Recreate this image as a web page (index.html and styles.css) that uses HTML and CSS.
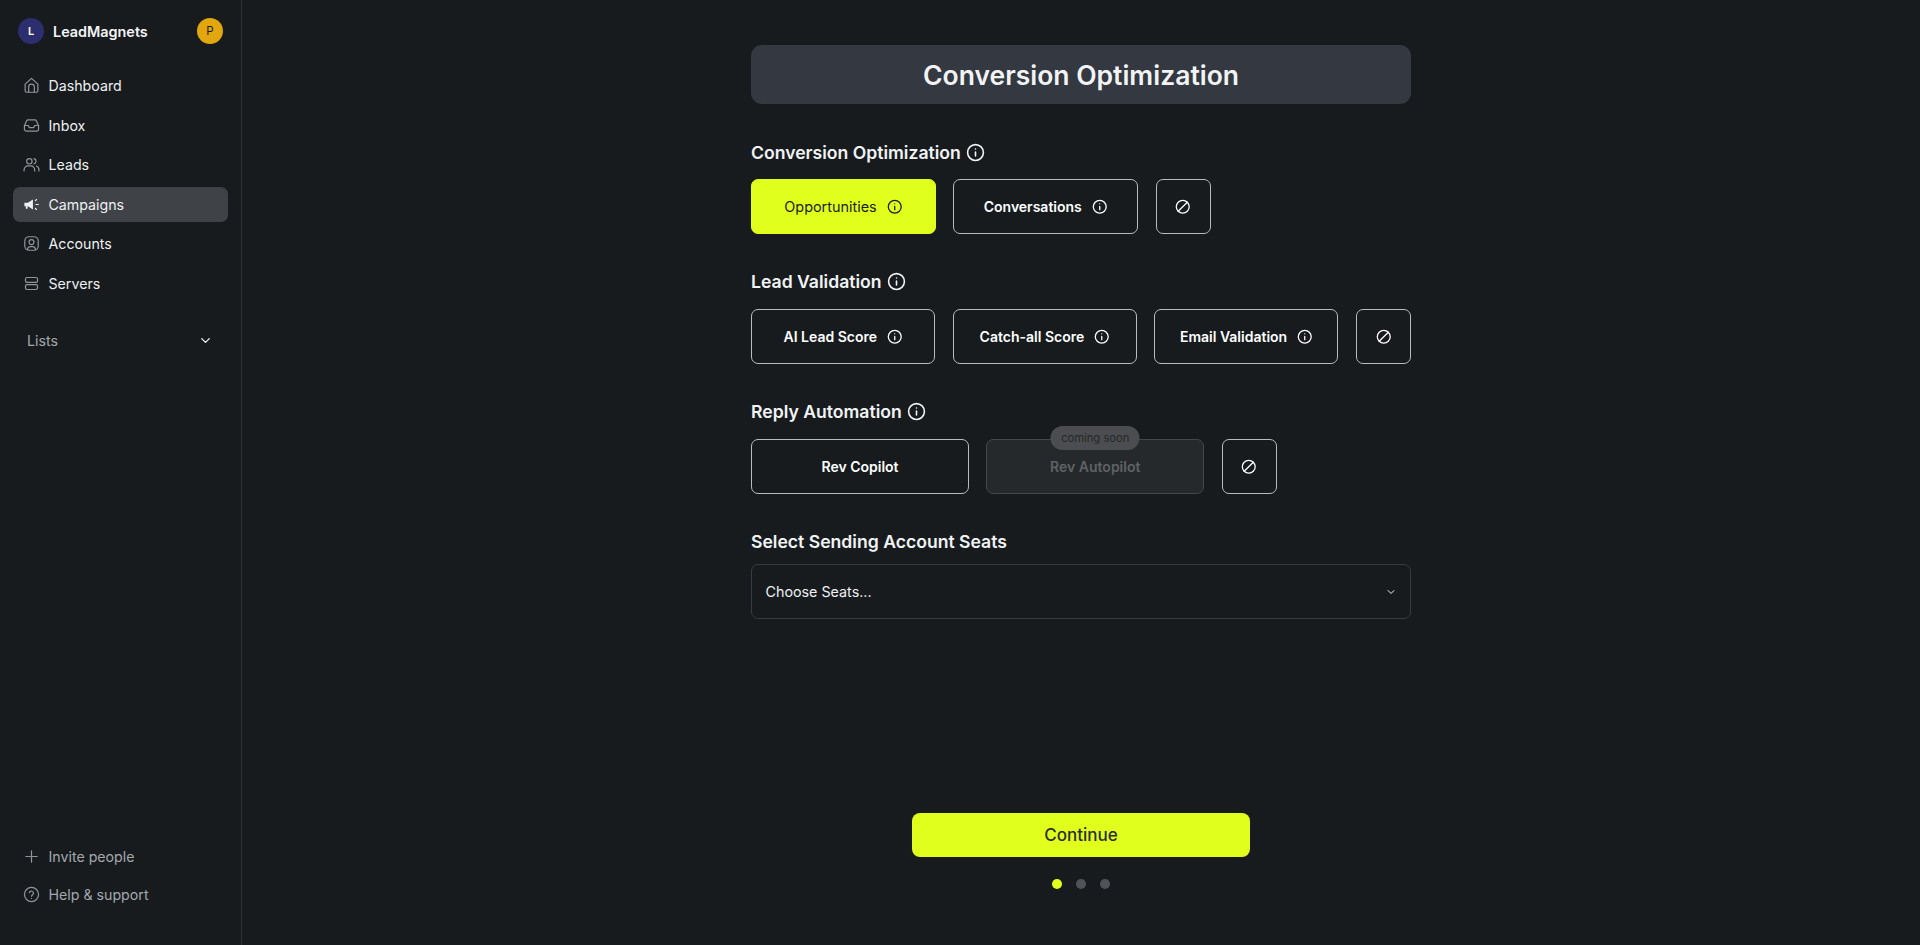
FILE: index.html
```html
<!DOCTYPE html>
<html lang="en">
<head>
<meta charset="utf-8">
<title>Conversion Optimization</title>
<link rel="stylesheet" href="styles.css">
</head>
<body>
<svg class="sprite" width="0" height="0" aria-hidden="true">
  <symbol id="i-info" viewBox="0 0 24 24"><circle cx="12" cy="12" r="10"/><path d="M12 16.500v-5M12 7.500v.01"/></symbol>
  <symbol id="i-ban" viewBox="0 0 24 24"><circle cx="12" cy="12" r="10"/><path d="M5 19 19 5"/></symbol>
</svg>
<div class="app">
  <aside class="sidebar">
    <div class="brand">
      <span class="logo">L</span>
      <span class="brand-name">LeadMagnets</span>
      <span class="avatar">P</span>
    </div>
    <nav class="nav">
      <a class="nav-item"><svg class="nav-icon" viewBox="0 0 24 24"><path d="M3 10 12 2l9 8v9.500a2 2 0 0 1-2 2H5a2 2 0 0 1-2-2z"/><path d="M8 21.500V14a4 4 0 0 1 8 0v7.500"/></svg>Dashboard</a>
      <a class="nav-item"><svg class="nav-icon" viewBox="0 0 24 24"><path d="M2 12.500 5 5.500A2.500 2.500 0 0 1 7.300 4h9.400A2.500 2.500 0 0 1 19 5.500l3 7V17a3 3 0 0 1-3 3H5a3 3 0 0 1-3-3z"/><path d="M2 12h5.500l1.500 3h6l1.500-3H22"/></svg>Inbox</a>
      <a class="nav-item"><svg class="nav-icon" viewBox="0 0 24 24"><circle cx="9" cy="7.500" r="3.800"/><path d="M1.500 21v-1.500A5.500 5.500 0 0 1 7 14h4a5.500 5.500 0 0 1 5.500 5.500V21"/><path d="M15.500 3.800a3.800 3.800 0 0 1 0 7.400"/><path d="M19 14.200a5.500 5.500 0 0 1 3.500 5.300V21"/></svg>Leads</a>
      <a class="nav-item active"><svg class="nav-icon solid" viewBox="0 0 24 24"><path class="fill" d="M2 9.500h5l7-4.500v14l-7-4.500H6.500V18H4v-3.500H2z"/><path d="M17.500 6.500 19 5M18.500 12h3M17.500 17.500 19 19"/></svg>Campaigns</a>
      <a class="nav-item"><svg class="nav-icon" viewBox="0 0 24 24"><rect x="2.500" y="2.500" width="19" height="19" rx="6"/><circle cx="12" cy="10" r="3.500"/><path d="M6.500 20.500v-.5a4 4 0 0 1 4-3.500h3a4 4 0 0 1 4 3.500v.5"/></svg>Accounts</a>
      <a class="nav-item"><svg class="nav-icon" viewBox="0 0 24 24"><rect x="3.500" y="3.500" width="17" height="7" rx="2"/><rect x="3.500" y="13.500" width="17" height="7" rx="2"/></svg>Servers</a>
    </nav>
    <div class="lists-row">
      <span>Lists</span>
      <svg class="lists-chevron" viewBox="0 0 24 24"><path d="m6 9 6 6 6-6"/></svg>
    </div>
    <div class="sidebar-foot">
      <a class="nav-item muted"><svg class="nav-icon" viewBox="0 0 24 24"><path d="M12 4v16M4 12h16"/></svg>Invite people</a>
      <a class="nav-item muted"><svg class="nav-icon" viewBox="0 0 24 24"><circle cx="12" cy="12" r="10"/><path d="M9 9.300a3 3 0 0 1 5.800 1c0 2-2.800 2.500-2.800 4M12 17.500v.01"/></svg>Help &amp; support</a>
    </div>
  </aside>
  <main class="main">
    <div class="form">
      <h1 class="title">Conversion Optimization</h1>

      <section class="group">
        <h2 class="group-title">Conversion Optimization <svg class="info-lg"><use href="#i-info"/></svg></h2>
        <div class="options cols-first">
          <button class="opt selected">Opportunities <svg class="info-sm"><use href="#i-info"/></svg></button>
          <button class="opt">Conversations <svg class="info-sm"><use href="#i-info"/></svg></button>
          <button class="opt"><svg class="info-sm"><use href="#i-ban"/></svg></button>
        </div>
      </section>

      <section class="group">
        <h2 class="group-title">Lead Validation <svg class="info-lg"><use href="#i-info"/></svg></h2>
        <div class="options cols-4">
          <button class="opt">AI Lead Score <svg class="info-sm"><use href="#i-info"/></svg></button>
          <button class="opt">Catch-all Score <svg class="info-sm"><use href="#i-info"/></svg></button>
          <button class="opt">Email Validation <svg class="info-sm"><use href="#i-info"/></svg></button>
          <button class="opt"><svg class="info-sm"><use href="#i-ban"/></svg></button>
        </div>
      </section>

      <section class="group">
        <h2 class="group-title">Reply Automation <svg class="info-lg"><use href="#i-info"/></svg></h2>
        <div class="options cols-3">
          <button class="opt">Rev Copilot</button>
          <button class="opt disabled">Rev Autopilot<span class="soon">coming soon</span></button>
          <button class="opt"><svg class="info-sm"><use href="#i-ban"/></svg></button>
        </div>
      </section>

      <section class="group">
        <h2 class="group-title tight">Select Sending Account Seats</h2>
        <div class="select">
          <span>Choose Seats...</span>
          <svg class="select-chevron" viewBox="0 0 24 24"><path d="m6 9 6 6 6-6"/></svg>
        </div>
      </section>
    </div>
    <div class="footer">
      <button class="continue">Continue</button>
      <div class="dots"><span class="dot on"></span><span class="dot"></span><span class="dot"></span></div>
    </div>
  </main>
</div>
</body>
</html>
```
FILE: styles.css
```css
* { box-sizing: border-box; }
html, body { height: 100%; }
body {
  margin: 0;
  background: #171b1e;
  color: #fff;
  font-family: Inter, "Liberation Sans", sans-serif;
  overflow: hidden;
}
.sprite { position: absolute; }
.app { display: flex; height: 945px; }

.sidebar {
  width: 242px;
  flex: none;
  border-right: 1px solid #2b2f33;
  padding: 18px 13px 0;
  display: flex;
  flex-direction: column;
}
.brand { display: flex; align-items: center; height: 26px; padding: 0 5px; }
.logo {
  width: 26px; height: 26px; border-radius: 50%;
  background: #2d2e6f; color: #fff;
  font-size: 11px; font-weight: 600;
  display: flex; align-items: center; justify-content: center;
}
.brand-name { margin-left: 9px; font-size: 14.400px; font-weight: 600; color: #f4f5f6; }
.avatar {
  width: 26px; height: 26px; border-radius: 50%;
  background: #e2a70f; color: #1a1a1a;
  font-size: 11.500px; font-weight: 400;
  margin-left: auto;
  display: flex; align-items: center; justify-content: center;
}
.nav { display: flex; flex-direction: column; gap: 4px; margin-top: 24px; }
.nav-item {
  display: flex; align-items: center; gap: 8.500px;
  height: 35.500px; padding: 0 10px;
  border-radius: 7px;
  font-size: 14.200px; font-weight: 400;
  color: #eef0f2;
}
.nav-item.active { background: #3f4347; }
.nav-item.muted { color: #a3a8ad; height: 34px; }
.nav-icon {
  width: 17px; height: 17px; flex: none;
  fill: none; stroke: #8f9499; stroke-width: 1.700;
  stroke-linecap: round; stroke-linejoin: round;
}
.nav-icon.solid { stroke: #eef0f2; }
.nav-icon .fill { fill: #eef0f2; stroke: none; }
.lists-row {
  display: flex; align-items: center; justify-content: space-between;
  margin-top: 29px; padding: 0 15px 0 14px;
  height: 20px;
  font-size: 14.200px; color: #a3a8ad;
}
.lists-chevron {
  width: 15px; height: 15px;
  fill: none; stroke: #eef0f2; stroke-width: 2.200;
  stroke-linecap: round; stroke-linejoin: round;
}
.sidebar-foot { margin-top: auto; padding-bottom: 34px; display: flex; flex-direction: column; gap: 4px; }

.main {
  flex: 1;
  display: flex; flex-direction: column; align-items: center;
  padding-top: 45px;
}
.form { width: 660px; }
.title {
  margin: 0;
  height: 59px;
  border-radius: 11px;
  background: #343840;
  color: #f1f3f5;
  font-size: 26.500px; font-weight: 600;
  display: flex; align-items: center; justify-content: center;
}
.group { margin-top: 37px; }
.group-title {
  margin: 0 0 17px;
  height: 21px;
  font-size: 17.600px; font-weight: 600; color: #f1f3f5;
  display: flex; align-items: center; gap: 5px;
}
.group-title.tight { margin-bottom: 12px; }
.title + .group { margin-top: 38px; }
.title + .group .group-title { margin-bottom: 16px; }
.info-lg, .info-sm {
  fill: none; stroke: currentColor; stroke-width: 2;
  stroke-linecap: round; stroke-linejoin: round; flex: none;
}
.info-lg { width: 19px; height: 19px; }
.info-sm { width: 15.500px; height: 15.500px; }
.options { display: grid; column-gap: 17.500px; height: 55px; }
.cols-first { grid-template-columns: 184.500px 184.500px 55px; column-gap: 17.750px; }
.cols-4 { grid-template-columns: 184px 184px 184px 55px; column-gap: 17.670px; }
.cols-3 { grid-template-columns: 218px 218px 55px; column-gap: 17.250px; }
.opt {
  position: relative;
  height: 55px;
  background: transparent;
  border: 1px solid #b9bbbd;
  border-radius: 7px;
  color: #fff;
  font: 600 14px Inter, "Liberation Sans", sans-serif;
  display: flex; align-items: center; justify-content: center; gap: 10px;
  padding: 0;
}
.opt.selected { background: #e1ff1c; border-color: #e1ff1c; color: #1a1d21; font-weight: 400; font-size: 14.400px; }
.opt.disabled { background: #26292c; border-color: #43474a; color: #5f6265; }
.soon {
  position: absolute; top: -14px; left: 50%;
  transform: translateX(-50%);
  height: 24px; width: 89px;
  border-radius: 12px;
  background: #4b4d50; color: #26282a;
  font-size: 11.200px; font-weight: 400;
  display: flex; align-items: center; justify-content: center;
}
.select {
  height: 55px;
  border: 1px solid #383c40;
  border-radius: 7px;
  padding: 0 13.500px;
  display: flex; align-items: center; justify-content: space-between;
  font-size: 14.300px; color: #eef0f2;
}
.select-chevron {
  width: 12px; height: 12px;
  fill: none; stroke: #eef0f2; stroke-width: 2;
  stroke-linecap: round; stroke-linejoin: round;
}
.footer {
  margin-top: auto;
  padding-bottom: 56px;
  display: flex; flex-direction: column; align-items: center;
}
.continue {
  width: 338px; height: 44px;
  border: 0; border-radius: 8px;
  background: #e1ff1c; color: #2b2d30;
  font: 500 17px Inter, "Liberation Sans", sans-serif;
}
.dots { display: flex; gap: 14px; margin-top: 22px; }
.dot { width: 10px; height: 10px; border-radius: 50%; background: #505358; }
.dot.on { background: #e1ff1c; }
```
